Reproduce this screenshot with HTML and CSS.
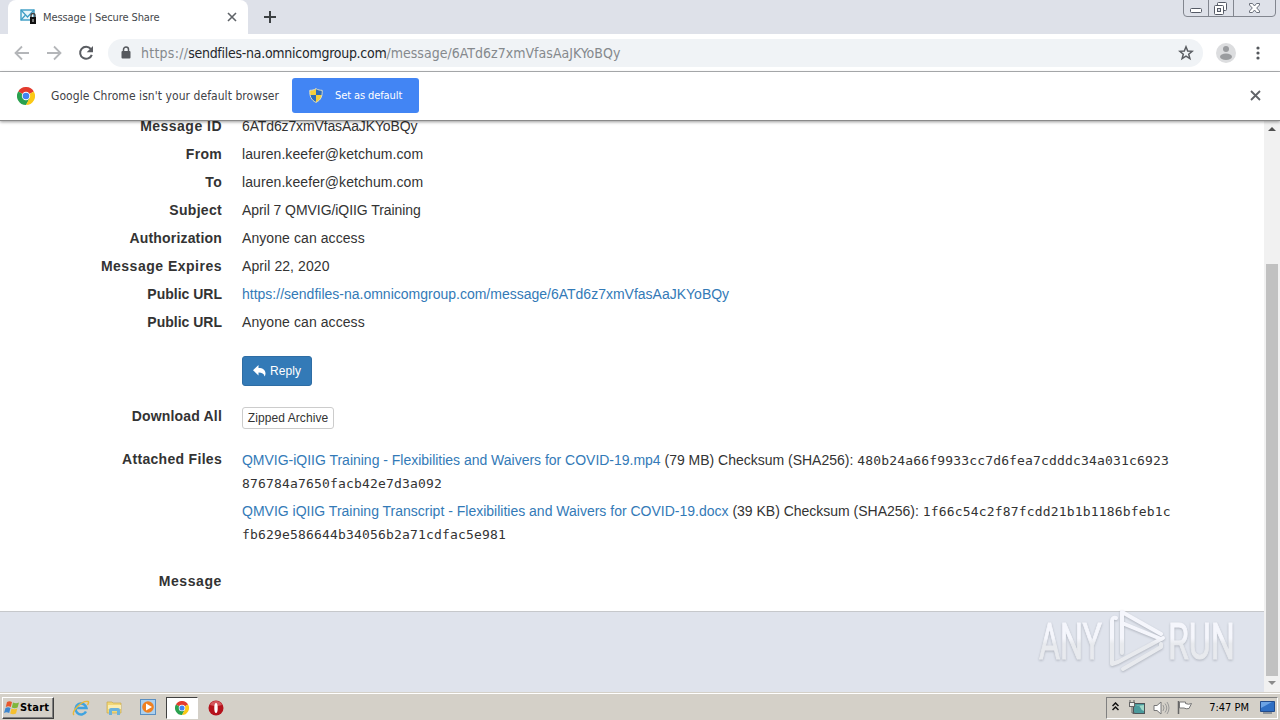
FILE: index.html
```html
<!DOCTYPE html>
<html lang="en">
<head>
    <meta charset="UTF-8">
    <meta name="viewport" content="width=device-width, initial-scale=1.0">
    <link rel="stylesheet" href="styles.css">
    <title>Message | Secure Share</title>
</head>
<body>
    <!-- Tab strip -->
    <div class="tabstrip">
        <div class="tab">
            <svg class="favicon" width="17" height="16" viewBox="0 0 17 16">
                <rect x="1" y="1" width="13" height="10" fill="#e8f5fb" stroke="#3b9cc4" stroke-width="1.4"/>
                <path d="M1 1l6.500 7L14 1M1 11l4-4.500" fill="none" stroke="#3b9cc4" stroke-width="1.200"/>
                <path d="M11 9V6.500a2 2 0 0 1 4 0V9" fill="none" stroke="#444" stroke-width="1.400"/>
                <rect x="10" y="8" width="6" height="7" fill="#111"/>
                <rect x="12.500" y="10" width="1" height="3" fill="#ddd"/>
            </svg>
            <span class="tab-title">Message | Secure Share</span>
            <svg class="tab-close" width="10" height="10" viewBox="0 0 10 10"><path d="M1 1l8 8M9 1l-8 8" stroke="#5f6368" stroke-width="1.600"/></svg>
        </div>
        <svg class="newtab" width="12" height="12" viewBox="0 0 12 12"><path d="M6 0v12M0 6h12" stroke="#3c4043" stroke-width="2"/></svg>
        <svg class="winbtns" width="94" height="18" viewBox="0 0 94 18">
            <path d="M.5 0v13q0 3.500 3.500 3.500h85q3.500 0 3.500-3.500V0M25.500 0v16M50.500 0v16" fill="none" stroke="#82868f"/>
            <rect x="7.500" y="8.500" width="11" height="4" rx="1" fill="#fff" stroke="#555a66"/>
            <rect x="34.500" y="2.500" width="9" height="8" rx="1" fill="#fff" stroke="#555a66"/>
            <rect x="31.500" y="5.500" width="9" height="9" rx="1" fill="#fff" stroke="#555a66"/>
            <rect x="34.500" y="8.500" width="3" height="3" fill="#dee1e9" stroke="#555a66"/>
            <path d="M66.500 3.500h3l2 2.500 2-2.500h3v1.500L73.700 8l2.800 3v1.500h-3l-2-2.500-2 2.500h-3V11l2.800-3-2.800-3z" fill="#fff" stroke="#6b707b"/>
        </svg>
    </div>

    <!-- Toolbar -->
    <div class="toolbar">
        <svg class="nav-icon" width="16" height="16" viewBox="0 0 16 16"><path d="M15 8H2M8 1.500L1.500 8 8 14.500" fill="none" stroke="#b4b6b9" stroke-width="1.800"/></svg>
        <svg class="nav-icon" width="16" height="16" viewBox="0 0 16 16"><path d="M1 8h13M8 1.500L14.500 8 8 14.500" fill="none" stroke="#b4b6b9" stroke-width="1.800"/></svg>
        <svg class="nav-icon" width="16" height="16" viewBox="0 0 16 16"><path d="M12.800 4A6 6 0 1 0 13.800 9.800" fill="none" stroke="#5a5d62" stroke-width="2"/><path d="M15 1v6.300H8.700z" fill="#5a5d62"/></svg>
        <div class="omnibox">
            <svg class="lock" width="10" height="13" viewBox="0 0 10 13"><rect x="0.500" y="5" width="9" height="7.500" rx="1" fill="#55585d"/><path d="M2.500 5V3.500a2.500 2.500 0 0 1 5 0V5" fill="none" stroke="#55585d" stroke-width="1.500"/></svg>
            <span class="url"><span class="scheme">https://</span><span class="host">sendfiles-na.omnicomgroup.com</span><span class="path">/message/6ATd6z7xmVfasAaJKYoBQy</span></span>
            <svg class="star" width="16" height="16" viewBox="0 0 16 16"><path d="M8 1.800l1.700 4.200 4.500.3-3.500 2.900 1.200 4.400L8 11.200l-3.900 2.400 1.200-4.400-3.500-2.900 4.500-.3z" fill="none" stroke="#5a5d62" stroke-width="1.500"/></svg>
        </div>
        <svg class="avatar" width="20" height="20" viewBox="0 0 20 20"><circle cx="10" cy="10" r="10" fill="#dcdddf"/><circle cx="10" cy="6" r="3" fill="#9a9c9f"/><ellipse cx="10" cy="13.800" rx="6" ry="3.200" fill="#9a9c9f"/></svg>
        <svg class="kebab" width="4" height="14" viewBox="0 0 4 14"><g fill="#55585d"><circle cx="2" cy="2" r="1.600"/><circle cx="2" cy="7" r="1.600"/><circle cx="2" cy="12" r="1.600"/></g></svg>
    </div>

    <!-- Default browser bar -->
    <div class="infobar">
        <svg width="18" height="18" viewBox="0 0 18 18">
            <path d="M9 9L1.200 4.500A9 9 0 0 1 16.800 4.500z" fill="#e33b2e"/>
            <path d="M9 9L1.200 4.500A9 9 0 0 0 9 18l4-7z" fill="#2aa14f"/>
            <path d="M9 9l7.800-4.500A9 9 0 0 1 9 18l3.600-7z" fill="#fbc916"/>
            <circle cx="9" cy="9" r="4.200" fill="#fff"/><circle cx="9" cy="9" r="3.300" fill="#4384f3"/>
        </svg>
        <span class="infobar-text">Google Chrome isn't your default browser</span>
        <div class="default-btn">
            <svg width="14" height="15" viewBox="0 0 14 15">
                <path d="M7 .5C5 2 3 2.200 .8 2.200 .5 8 2 12 7 14.500z" fill="#f5cf3a"/>
                <path d="M7 .5c2 1.500 4 1.700 6.200 1.700C13.500 8 12 12 7 14.500z" fill="#2e6db8"/>
                <path d="M.9 7H7v7.500C3 12.500 1.300 10 .9 7z" fill="#2e6db8"/>
                <path d="M13.100 7H7v7.500c4-2 5.700-4.500 6.100-7.500z" fill="#f5cf3a"/>
                <path d="M7 .6C5 2 3 2.300 .8 2.300.5 8 2 12 7 14.400c5-2.400 6.500-6.400 6.200-12.100C11 2.300 9 2 7 .6z" fill="none" stroke="#d9dcc8"/>
            </svg>
            <span>Set as default</span>
        </div>
        <svg class="infobar-close" width="11" height="11" viewBox="0 0 11 11"><path d="M1 1l9 9M10 1l-9 9" stroke="#606368" stroke-width="1.800"/></svg>
    </div>

    <!-- Web page -->
    <div class="viewport">
        <div class="page">
            <dl class="details">
                <dt class="t-id">Message ID</dt><dd class="id">6ATd6z7xmVfasAaJKYoBQy</dd>
                <dt class="t-from">From</dt><dd>lauren.keefer@ketchum.com</dd>
                <dt class="t-from">To</dt><dd>lauren.keefer@ketchum.com</dd>
                <dt class="t-from">Subject</dt><dd class="subject">April 7 QMVIG/iQIIG Training</dd>
                <dt class="t-auth">Authorization</dt><dd>Anyone can access</dd>
                <dt>Message Expires</dt><dd>April 22, 2020</dd>
                <dt class="t-url">Public URL</dt><dd><a class="public-link">https://sendfiles-na.omnicomgroup.com/message/6ATd6z7xmVfasAaJKYoBQy</a></dd>
                <dt class="t-url">Public URL</dt><dd>Anyone can access</dd>
            </dl>
            <div class="row reply-row">
                <div class="btn-reply">
                    <svg width="13" height="12" viewBox="0 0 13 12"><path d="M5.500 0v3C10 3 12.500 5 12.500 8.500c0 1.200-.4 2.200-1 3C11 8.500 9 7.500 5.500 7.500v3L0 5.200z" fill="#fff"/></svg>
                    <span>Reply</span>
                </div>
            </div>
            <div class="row zip-row">
                <div class="label t-auth">Download All</div>
                <div class="btn-zip">Zipped Archive</div>
            </div>
            <div class="row files-row">
                <div class="label t-files">Attached Files</div>
                <div class="files">
                    <p><a class="file-a">QMVIG-iQIIG Training - Flexibilities and Waivers for COVID-19.mp4</a> (79 MB) Checksum (SHA256): <code>480b24a66f9933cc7d6fea7cdddc34a031c6923<br>876784a7650facb42e7d3a092</code></p>
                    <p><a class="file-b">QMVIG iQIIG Training Transcript - Flexibilities and Waivers for COVID-19.docx</a> (39 KB) Checksum (SHA256): <code>1f66c54c2f87fcdd21b1b1186bfeb1c<br>fb629e586644b34056b2a71cdfac5e981</code></p>
                </div>
            </div>
            <div class="row message-row">
                <div class="label t-msg">Message</div>
            </div>
            <div class="footer"></div>
        </div>
        <div class="scrollbar">
            <svg width="8" height="4" viewBox="0 0 8 4"><path d="M0 4l4-4 4 4z" fill="#505050"/></svg>
            <div class="thumb"></div>
            <svg width="8" height="4" viewBox="0 0 8 4"><path d="M0 0l4 4 4-4z" fill="#8b8b8b"/></svg>
        </div>
        <svg class="watermark" width="210" height="76" viewBox="0 0 210 76">
            <defs>
                <linearGradient id="wm" x1="0" y1="10" x2="0" y2="66" gradientUnits="userSpaceOnUse">
                    <stop offset="0.450" stop-color="#f5f6fc"/>
                    <stop offset="0.550" stop-color="#e8eaee"/>
                </linearGradient>
            </defs>
            <g class="wm-text" fill="url(#wm)" stroke="url(#wm)">
                <text x="9" y="56" textLength="63" lengthAdjust="spacingAndGlyphs">ANY</text>
                <text x="138" y="56" textLength="67" lengthAdjust="spacingAndGlyphs">RUN</text>
            </g>
            <g class="wm-logo" fill="none" stroke="url(#wm)" stroke-linecap="round" stroke-linejoin="round">
                <path d="M86 15q-4-1-4 3v43l6-2 45-24"/>
                <path d="M131 31L92 9v41M92 20l39 16"/>
                <path d="M93 66l38-22v-3"/>
            </g>
        </svg>
    </div>

    <!-- Taskbar -->
    <div class="taskbar">
        <div class="start">
            <svg width="16" height="15" viewBox="0 0 16 15">
                <path d="M3 2q2.500-1.500 5 0L6.800 7q-2.500-1.300-5 0z" fill="#e8572c"/>
                <path d="M9 2.500q3 1.500 6 0L13.600 7.400q-3 1.500-5.800 0z" fill="#7fb63c"/>
                <path d="M1.500 8q2.500-1.500 5 0l-1.300 5Q2.500 11.500 0 13z" fill="#3d86cf"/>
                <path d="M7.500 8.400q3 1.500 5.800 0L12 13.400q-3 1.500-5.800 0z" fill="#f6c02e"/>
            </svg>
            <span>Start</span>
        </div>
        <div class="task ie">
            <svg width="18" height="18" viewBox="0 0 18 18"><path d="M14 12.500A5.500 5.500 0 1 1 14.500 9H4" fill="none" stroke="#3fa3e0" stroke-width="2.500"/><path d="M2 16C-1 13 10 1 16 2.500c1 .5.500 2-.5 3.500" fill="none" stroke="#e8b93a" stroke-width="1.400"/></svg>
        </div>
        <div class="task">
            <svg width="17" height="17" viewBox="0 0 17 17"><path d="M1 3h5l1 1h8v10H1z" fill="#f1d778" stroke="#c9a94a" stroke-width=".7"/><path d="M2 6h13v4H2z" fill="#fbedb0"/><path d="M3 16v-5q0-2 2-2h7q2 0 2 2v5h-3v-4H6v4z" fill="#6bb2dc"/></svg>
        </div>
        <div class="task">
            <svg width="17" height="17" viewBox="0 0 17 17"><rect x=".5" y=".5" width="15" height="15" fill="#acd0ee" stroke="#5a8fc2"/><circle cx="8" cy="8" r="5.800" fill="#f08020"/><path d="M6 4.500v7L12 8z" fill="#fff"/></svg>
        </div>
        <div class="task active">
            <svg width="14" height="14" viewBox="0 0 18 18">
                <path d="M9 9L1.200 4.500A9 9 0 0 1 16.800 4.500z" fill="#e33b2e"/>
                <path d="M9 9L1.200 4.500A9 9 0 0 0 9 18l4-7z" fill="#2aa14f"/>
                <path d="M9 9l7.800-4.500A9 9 0 0 1 9 18l3.600-7z" fill="#fbc916"/>
                <circle cx="9" cy="9" r="4.200" fill="#fff"/><circle cx="9" cy="9" r="3.300" fill="#4384f3"/>
            </svg>
        </div>
        <div class="task opera">
            <svg width="16" height="16" viewBox="0 0 16 16"><circle cx="8" cy="8" r="7.500" fill="#b5121c"/><path d="M2 5a6.500 6.500 0 0 1 12 0q-6 2-12 0z" fill="#d4565c"/><ellipse cx="8" cy="8" rx="1.700" ry="5" fill="#fff"/></svg>
        </div>
        <div class="tray">
            <svg class="chevrons" width="7" height="9" viewBox="0 0 7 9"><path d="M.5 4l3-3 3 3M.5 8l3-3 3 3" fill="none" stroke="#111" stroke-width="1.500"/></svg>
            <svg class="net" width="16" height="15" viewBox="0 0 16 15"><rect x="4.500" y="3.500" width="11" height="10" fill="#4b9a9c" stroke="#4d5357"/><path d="M7 6q3-2 4 1t4 4v-6z" fill="#9ed8c8"/><path d="M1 0v3M5 0v3M3 5v8h3" fill="none" stroke="#666"/><rect x=".5" y="2.500" width="5" height="4" fill="#eee" stroke="#666"/></svg>
            <svg class="vol" width="17" height="14" viewBox="0 0 17 14"><path d="M1 4.500h3L8 1v12L4 9.500H1z" fill="#fff" stroke="#777"/><path d="M10 4q2 3 0 6M12 2.500q3.500 4.500 0 9M14 1q4 6 0 12" fill="none" stroke="#999"/></svg>
            <svg class="flag" width="16" height="15" viewBox="0 0 16 15"><path d="M1.500 1v13" stroke="#666" stroke-width="1.500"/><path d="M2.500 2h6v1.500q3 1.500 6 0L12 8.500q-3 .8-5-.5H2.500z" fill="#fff" stroke="#777"/></svg>
            <span class="clock">7:47 PM</span>
            <svg class="desk" width="15" height="13" viewBox="0 0 15 13"><path d="M.5.500h14v10H.5z" fill="#2f6fc4" stroke="#234c8c"/><path d="M1 1h11L1 7z" fill="#6ca3e4"/><path d="M3 12h9" stroke="#4d5a6e"/></svg>
        </div>
    </div>
</body>
</html>
```
FILE: styles.css
```css
* {
    box-sizing: border-box;
}
body {
    margin: 0;
    width: 1280px;
    height: 720px;
    display: flex;
    flex-direction: column;
    overflow: hidden;
    background-color: #fff;
    color: #333;
    font-family: "Liberation Sans", Arial, sans-serif;
    font-size: 14px;
    white-space: nowrap;
}
svg {
    display: block;
    flex: none;
}

/* Browser window */
.tabstrip {
    height: 34px;
    flex: none;
    display: flex;
    align-items: flex-start;
    padding-left: 8px;
    background-color: #dee1e9;
}
.tab {
    height: 34px;
    width: 240px;
    display: flex;
    align-items: center;
    padding: 0 11px 0 12px;
    border-radius: 8px 8px 0 0;
    background-color: #fff;
}
.tab-title {
    flex: 1;
    margin-left: 6px;
    font-family: "DejaVu Sans Condensed", "DejaVu Sans", sans-serif;
    font-size: 11px;
    letter-spacing: -0.100px;
    color: #45484c;
}
.newtab {
    margin: 11px 0 0 16px;
}
.winbtns {
    margin-left: auto;
    margin-right: 3px;
}
.toolbar {
    height: 38px;
    flex: none;
    display: flex;
    align-items: center;
    padding: 0 20px 0 14px;
    border-bottom: 1px solid #b0b2b4;
}
.nav-icon {
    margin-right: 16px;
}
.omnibox {
    width: 1095px;
    height: 28px;
    margin-left: -2px;
    display: flex;
    align-items: center;
    padding: 0 9px 0 13px;
    border-radius: 14px;
    background-color: #f0f3f6;
}
.url {
    flex: 1;
    margin-left: 10px;
    font-family: "DejaVu Sans Condensed", "DejaVu Sans", sans-serif;
    font-size: 14px;
    color: #85898d;
}
.url .scheme {
    letter-spacing: 0.250px;
}
.url .host {
    letter-spacing: -0.270px;
    color: #24272b;
}
.url .path {
    letter-spacing: 0.020px;
}
.avatar {
    margin-left: 13px;
}
.kebab {
    margin-left: auto;
}
.infobar {
    height: 49px;
    flex: none;
    display: flex;
    align-items: center;
    padding: 0 19px 1px 17px;
    border-bottom: 1px solid #8a8a8a;
    font-family: "DejaVu Sans Condensed", "DejaVu Sans", sans-serif;
    z-index: 1;
    box-shadow: 0 1px 3px rgba(0, 0, 0, 0.4);
    background-color: #fff;
}
.infobar-text {
    width: 241px;
    margin-left: 16px;
    font-size: 12px;
    letter-spacing: 0.060px;
    color: #3f4246;
}
.default-btn {
    width: 127px;
    height: 35px;
    display: flex;
    align-items: center;
    padding-left: 17px;
    border-radius: 3px;
    background-color: #4285f4;
    color: #fff;
    font-size: 11px;
    letter-spacing: -0.100px;
}
.default-btn span {
    margin-left: 12px;
}
.infobar-close {
    margin-left: auto;
}

/* Message page */
.viewport {
    position: relative;
    flex: 1;
    display: flex;
    overflow: hidden;
}
.page {
    flex: 1;
    display: flex;
    flex-direction: column;
    letter-spacing: 0.080px;
}
.details {
    display: grid;
    grid-template-columns: 222px 1fr;
    column-gap: 20px;
    grid-auto-rows: 28px;
    line-height: 28px;
    margin: -9px 0 0;
}
.details dd {
    margin: 0;
}
.details .id {
    letter-spacing: -0.130px;
}
.details .subject {
    letter-spacing: -0.060px;
}
dt, .label {
    width: 222px;
    text-align: right;
    font-weight: bold;
    letter-spacing: 0.500px;
}
.t-id {
    letter-spacing: 0.480px;
}
.t-from {
    letter-spacing: 0.300px;
}
.t-auth {
    letter-spacing: 0.180px;
}
.t-url {
    letter-spacing: 0;
}
.t-files {
    letter-spacing: 0.300px;
}
.t-msg {
    letter-spacing: 0.600px;
}
a {
    color: #337ab7;
}
.public-link {
    letter-spacing: 0;
}
.row {
    display: flex;
    gap: 20px;
}
.reply-row {
    padding-left: 242px;
    margin-top: 20px;
}
.btn-reply {
    width: 70px;
    height: 30px;
    display: flex;
    align-items: center;
    gap: 4px;
    padding-left: 10px;
    border: 1px solid #2e6da4;
    border-radius: 3px;
    background-color: #337ab7;
    color: #fff;
    font-size: 12px;
}
.zip-row {
    margin-top: 21px;
    line-height: 20px;
}
.zip-row .label {
    margin-top: -1px;
}
.btn-zip {
    width: 92px;
    height: 22px;
    border: 1px solid #ccc;
    border-radius: 3px;
    text-align: center;
    font-size: 12px;
}
.files-row {
    margin-top: 20px;
    line-height: 23px;
}
.files-row .label {
    margin-top: -1px;
}
.files p {
    margin: 0 0 5px;
    letter-spacing: -0.010px;
}
.file-a {
    letter-spacing: -0.015px;
}
.file-b {
    letter-spacing: 0;
}
code {
    font-family: "DejaVu Sans Mono", monospace;
    font-size: 13px;
    line-height: 1;
    letter-spacing: 0.170px;
}
.message-row {
    margin-top: 19px;
    line-height: 23px;
}
.footer {
    flex: 1;
    margin-top: 18px;
    border-top: 1px solid #c6c8cb;
    background-color: #dfe3ec;
}
.scrollbar {
    width: 16px;
    display: flex;
    flex-direction: column;
    align-items: center;
    padding: 6px 0 7px;
    background-color: #f1f1f1;
}
.thumb {
    width: 12px;
    height: 412px;
    margin: auto 0 5px;
    background-color: #c1c1c1;
}
.watermark {
    position: absolute;
    left: 1030px;
    bottom: 13px;
    filter: drop-shadow(0 1px 1px rgba(90, 95, 105, 0.35));
}
.wm-text {
    font-family: Roboto, sans-serif;
    font-size: 50px;
    stroke-width: 1px;
}
.wm-logo {
    stroke-width: 4px;
}

/* Taskbar */
.taskbar {
    height: 28px;
    flex: none;
    display: flex;
    align-items: center;
    padding: 2px 2px 0;
    border-top: 1px solid #d4d0c8;
    box-shadow: inset 0 1px #fff;
    background-color: #d4d0c8;
    font-family: "DejaVu Sans Condensed", "DejaVu Sans", sans-serif;
    font-size: 11px;
    color: #000;
}
.start {
    width: 52px;
    height: 22px;
    margin-right: 12px;
    display: flex;
    align-items: center;
    padding-left: 1px;
    border: 1px solid;
    border-color: #fff #404040 #404040 #fff;
    box-shadow: inset -1px -1px #808080;
    font-weight: bold;
}
.start span {
    letter-spacing: 0.200px;
}
.task {
    width: 32px;
    height: 22px;
    margin-right: 2px;
    display: flex;
    align-items: center;
    justify-content: center;
}
.task.ie {
    width: 29px;
    margin-right: 3px;
}
.task.active {
    border: 1px solid;
    border-color: #404040 #fff #fff #404040;
    background-color: #fff;
}
.tray {
    width: 172px;
    height: 22px;
    margin-left: auto;
    display: flex;
    align-items: center;
    padding: 0 2px 0 5px;
    border: 1px solid;
    border-color: #808080 #fff #fff #808080;
}
.chevrons {
    margin-bottom: 3px;
}
.net {
    margin-left: 10px;
}
.vol {
    margin-left: 8px;
}
.flag {
    margin-left: 7px;
}
.clock {
    margin-left: auto;
    margin-right: 11px;
}
```
